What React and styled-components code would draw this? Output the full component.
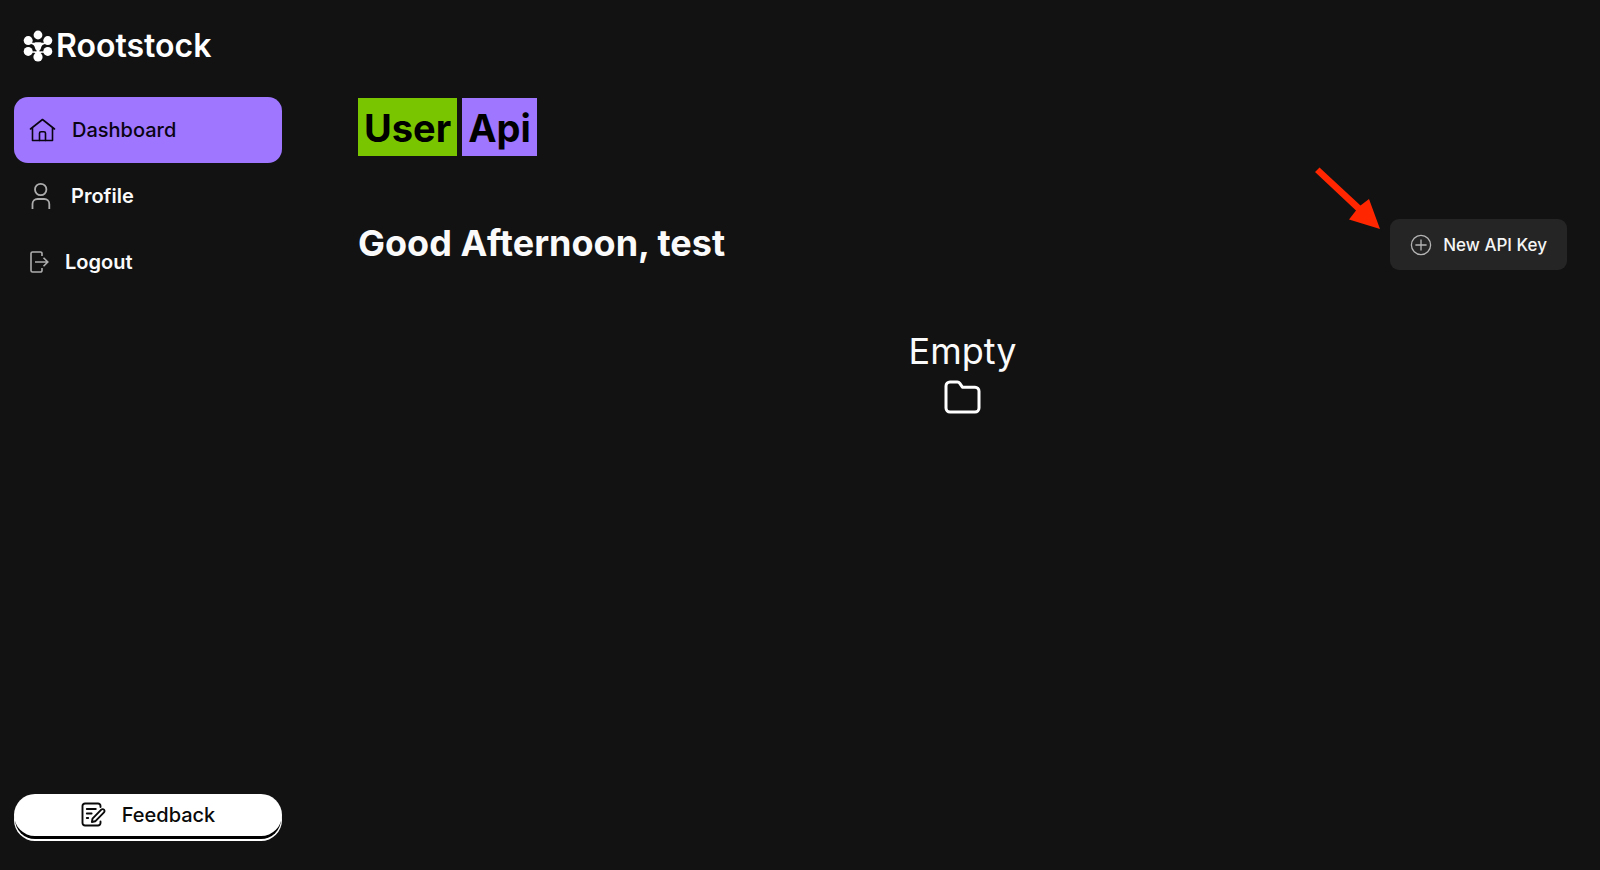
import React from 'react';
import styled, { createGlobalStyle } from 'styled-components';

const GlobalStyle = createGlobalStyle`
  *, *::before, *::after { box-sizing: border-box; }
  body {
    margin: 0;
    background: #121212;
    color: #fafafa;
    font-family: Inter, "Liberation Sans", sans-serif;
  }
  button { font: inherit; border: 0; cursor: pointer; }
`;

const Page = styled.div`
  display: flex;
  min-height: 100vh;
`;

const Sidebar = styled.aside`
  display: flex;
  flex-direction: column;
  flex: 0 0 282px;
  padding: 28px 0 29px 14px;
`;

const Brand = styled.a`
  display: flex;
  align-items: center;
  gap: 3px;
  height: 36px;
  margin-bottom: 33px;
  padding-left: 9px;
  color: #fff;
  font-size: 32px;
  line-height: 36px;
  font-weight: 600;
  text-decoration: none;
`;

const Nav = styled.nav`
  display: flex;
  flex-direction: column;
`;

const NavLink = styled.a`
  display: flex;
  align-items: center;
  gap: 15px;
  height: 66px;
  padding: 0 14px;
  border-radius: 14px;
  background: ${(p) => (p.$active ? '#9e76ff' : 'transparent')};
  color: ${(p) => (p.$active ? '#0a0412' : '#fafafa')};
  font-size: 20px;
  line-height: 24px;
  font-weight: ${(p) => (p.$active ? 500 : 600)};
  text-decoration: none;
`;

const FeedbackButton = styled.button`
  display: flex;
  align-items: center;
  justify-content: center;
  gap: 16px;
  height: 42px;
  margin-top: auto;
  margin-bottom: 5px;
  border-radius: 21px;
  background: #fff;
  color: #0a0a0a;
  font-size: 20px;
  line-height: 24px;
  font-weight: 500;
  box-shadow: 0 4px 0 -1px #000, 0 5px 0 0 #fff;
`;

const Main = styled.main`
  display: flex;
  flex-direction: column;
  flex: 1;
  padding: 98px 33px 0 76px;
`;

const Title = styled.h1`
  display: flex;
  gap: 5px;
  margin: 0;
  font-size: 38px;
  line-height: 56px;
  font-weight: 700;
`;

const Mark = styled.span`
  padding: 2px 6px 0;
  background: ${(p) => p.$tone};
  color: #000;
`;

const Toolbar = styled.div`
  display: flex;
  align-items: flex-start;
  justify-content: space-between;
  margin-top: 63px;
`;

const Greeting = styled.h2`
  margin: 0;
  font-size: 36px;
  line-height: 48px;
  font-weight: 700;
`;

const Callout = styled.div`
  position: relative;
`;

const CalloutArrow = styled.svg`
  position: absolute;
  right: 100%;
  bottom: 40px;
  margin-right: 10px;
`;

const NewKeyButton = styled.button`
  display: flex;
  align-items: center;
  gap: 11px;
  height: 51px;
  padding: 0 20px;
  border-radius: 9px;
  background: #252525;
  color: #f5f5f5;
  font-size: 17px;
  line-height: 24px;
  font-weight: 500;
`;

const EmptyState = styled.section`
  display: flex;
  flex-direction: column;
  align-items: center;
  margin-top: 57px;
`;

const EmptyText = styled.p`
  margin: 0 0 4px;
  font-size: 36px;
  line-height: 48px;
`;

const LogoIcon = () => (
  <svg width="30" height="32" viewBox="0 0 30 32" fill="#fff" aria-hidden="true">
    <circle cx="15" cy="5" r="4.4" />
    <circle cx="5.2" cy="10.6" r="4.5" />
    <circle cx="24.8" cy="10.6" r="4.5" />
    <circle cx="5.2" cy="21.4" r="4.5" />
    <circle cx="24.8" cy="21.4" r="4.5" />
    <circle cx="15" cy="27" r="4.6" />
    <path d="M8 12.500q3 .6 4.500-.3h5q1.500.9 4.500.3v1.500q-3.400.6-4 4-.3 1.800-1.500 2.200v1.400q1.500-.6 4-.2h1.500v1.400h-3.500l-2 2h-3l-2-2H8v-1.400h1.500q2.500-.4 4 .2v-1.400q-1.200-.4-1.500-2.200-.6-3.400-4-4z" />
  </svg>
);

const HomeIcon = () => (
  <svg width="29" height="28" viewBox="0 0 29 28" fill="none" stroke="currentColor" strokeWidth="1.6" strokeLinecap="round" strokeLinejoin="round" aria-hidden="true">
    <path d="M2.500 13 14.500 3.500 26.500 13M4.500 11.600V24.500H24.500V11.600" />
    <path d="M11.500 24.500V17.300a1.600 1.600 0 0 1 1.600-1.600h2.800a1.600 1.600 0 0 1 1.600 1.600v7.200" />
  </svg>
);

const UserIcon = () => (
  <svg width="28" height="28" viewBox="0 0 28 28" fill="none" stroke="#adadad" strokeWidth="1.8" aria-hidden="true">
    <circle cx="12.700" cy="7.500" r="5.700" />
    <path d="M4.500 27v-5a5 5 0 0 1 5-5h6.800a5 5 0 0 1 5 5v5" />
  </svg>
);

const LogoutIcon = () => (
  <svg width="22" height="24" viewBox="0 0 22 24" fill="none" stroke="#adadad" strokeWidth="1.6" aria-hidden="true">
    <path d="M14 6V3.500a1.500 1.500 0 0 0-1.500-1.500H4.500A1.500 1.500 0 0 0 3 3.500v17A1.500 1.500 0 0 0 4.500 22h8a1.500 1.500 0 0 0 1.500-1.500V18" />
    <path d="M7 12h12.500M15.500 7.700l4.300 4.300-4.300 4.300" />
  </svg>
);

const PlusCircleIcon = () => (
  <svg width="22" height="22" viewBox="0 0 22 22" fill="none" stroke="#b5b5b5" strokeWidth="1.300" aria-hidden="true">
    <circle cx="11" cy="11" r="9.600" />
    <path d="M11 5.400v11.200M5.400 11h11.200" />
  </svg>
);

const FolderIcon = () => (
  <svg width="38" height="36" viewBox="0 0 38 36" fill="none" stroke="#fff" strokeWidth="3" strokeLinejoin="round" aria-hidden="true">
    <path d="M2 7a4 4 0 0 1 4-4h7.300a3 3 0 0 1 2.500 1.300l2.600 3.900H31a4 4 0 0 1 4 4v16.800a4 4 0 0 1-4 4H6a4 4 0 0 1-4-4z" />
  </svg>
);

const FeedbackIcon = () => (
  <svg width="25" height="26" viewBox="0 0 25 26" fill="none" stroke="currentColor" strokeWidth="1.900" strokeLinecap="round" strokeLinejoin="round" aria-hidden="true">
    <path d="M19.500 5V4a2.500 2.500 0 0 0-2.500-2.500H4A2.500 2.500 0 0 0 1.500 4v17A2.500 2.500 0 0 0 4 23.500h13a2.500 2.500 0 0 0 2.500-2.500v-1.500" />
    <path d="M5.800 7h9M5.800 11.500h4.800M5.800 16h1.400" />
    <path d="M20.300 7.700a1.800 1.800 0 0 1 2.700 2.600l-8.800 9-3.300.7.600-3.400z" />
  </svg>
);

export default function App() {
  return (
    <>
      <GlobalStyle />
      <Page>
        <Sidebar>
          <Brand href="#">
            <LogoIcon />
            Rootstock
          </Brand>
          <Nav aria-label="Main">
            <NavLink href="#dashboard" $active aria-current="page">
              <HomeIcon />
              Dashboard
            </NavLink>
            <NavLink href="#profile">
              <UserIcon />
              Profile
            </NavLink>
            <NavLink href="#logout">
              <LogoutIcon />
              Logout
            </NavLink>
          </Nav>
          <FeedbackButton type="button">
            <FeedbackIcon />
            Feedback
          </FeedbackButton>
        </Sidebar>
        <Main>
          <Title>
            <Mark $tone="#79c600">User</Mark>
            <Mark $tone="#9e76ff">Api</Mark>
          </Title>
          <Toolbar>
            <Greeting>Good Afternoon, test</Greeting>
            <Callout>
              <NewKeyButton type="button">
                <PlusCircleIcon />
                New API Key
              </NewKeyButton>
              <CalloutArrow width="68" height="66" viewBox="0 0 68 66" aria-hidden="true">
                <path d="M3 8 7.500 3.500 48.500 41.500 57 35 68 65 37 55.500 44 46.500z" fill="#ff2600" />
              </CalloutArrow>
            </Callout>
          </Toolbar>
          <EmptyState>
            <EmptyText>Empty</EmptyText>
            <FolderIcon />
          </EmptyState>
        </Main>
      </Page>
    </>
  );
}
